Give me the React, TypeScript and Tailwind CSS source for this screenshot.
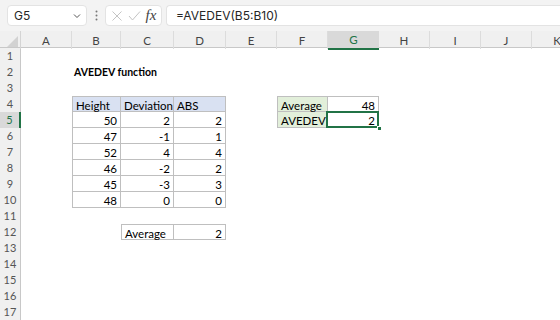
import React from 'react';

type Cell = {
  v: string;
  right?: boolean;
  bold?: boolean;
  fill?: 'blue' | 'green';
  box?: boolean;
  sel?: boolean;
};

const COLS = ['A', 'B', 'C', 'D', 'E', 'F', 'G', 'H', 'I', 'J', 'K'];
const ROWS = Array.from({ length: 17 }, (_, i) => i + 1);

const cells: Record<string, Cell> = {
  B2: { v: 'AVEDEV function', bold: true },
  B4: { v: 'Height', fill: 'blue', box: true },
  C4: { v: 'Deviation', fill: 'blue', box: true },
  D4: { v: 'ABS', fill: 'blue', box: true },
  F4: { v: 'Average', fill: 'green', box: true },
  G4: { v: '48', right: true, box: true },
  F5: { v: 'AVEDEV', fill: 'green', box: true },
  G5: { v: '2', right: true, box: true, sel: true },
  C12: { v: 'Average', box: true },
  D12: { v: '2', right: true, box: true },
};

const data = [
  [50, 2, 2],
  [47, -1, 1],
  [52, 4, 4],
  [46, -2, 2],
  [45, -3, 3],
  [48, 0, 0],
];
data.forEach((r, i) => {
  const row = 5 + i;
  ['B', 'C', 'D'].forEach((c, j) => {
    cells[c + row] = { v: String(r[j]), right: true, box: true };
  });
});

const isBox = (col: string, row: number) => !!cells[col + row]?.box;
const prevCol = (col: string) => COLS[COLS.indexOf(col) - 1] ?? '';

const GRID =
  'grid grid-cols-[21px_51px_49px_53px_52px_51px_51px_51px_51px_51px_51px_51px]';

function FormulaBar() {
  return (
    <div className="h-[31px] bg-[#f3f3f3] flex items-start pt-[5px] font-['Inter',sans-serif] text-[12px] text-[#262626]">
      <div className="ml-[7px] w-[80px] h-[21px] bg-white rounded-[4px] border border-[#e3e3e3] flex items-center justify-between pl-[6px] pr-[4px]">
        <span>G5</span>
        <svg width="10" height="10" viewBox="0 0 10 10">
          <path d="M2 3.5 L5 6.5 L8 3.5" fill="none" stroke="#555" strokeWidth="1" />
        </svg>
      </div>
      <div className="w-[18px] h-[21px] flex items-center justify-center">
        <svg width="3" height="11" viewBox="0 0 3 11">
          <circle cx="1.5" cy="1.5" r="1" fill="#777" />
          <circle cx="1.5" cy="5.5" r="1" fill="#777" />
          <circle cx="1.5" cy="9.5" r="1" fill="#777" />
        </svg>
      </div>
      <div className="w-[57px] h-[21px] bg-white rounded-[4px] border border-[#e3e3e3] flex items-center justify-around px-[2px]">
        <svg width="12" height="12" viewBox="0 0 12 12">
          <path d="M1.5 1.5 L10.5 10.5 M10.5 1.5 L1.5 10.5" stroke="#c4c4c4" strokeWidth="1" />
        </svg>
        <svg width="13" height="12" viewBox="0 0 13 12">
          <path d="M1 6 L4.5 10 L12 1.5" fill="none" stroke="#c4c4c4" strokeWidth="1" />
        </svg>
        <span className="font-['Liberation_Serif',serif] italic text-[15px] text-[#444] leading-none">
          fx
        </span>
      </div>
      <div className="ml-[4px] flex-1 h-[21px] bg-white rounded-l-[4px] border border-r-0 border-[#e3e3e3] flex items-center pl-[9px]">
        =AVEDEV(B5:B10)
      </div>
    </div>
  );
}

function ColumnHeaders() {
  return (
    <div className={GRID + ' h-[17px] bg-[#f0f0f0] border-b border-[#c8c8c8]'}>
      <div className="relative border-r border-[#d4d4d4]">
        <svg className="absolute right-[2px] bottom-[2px]" width="11" height="11" viewBox="0 0 11 11">
          <path d="M11 0 L11 11 L0 11 Z" fill="#d2d2d2" />
        </svg>
      </div>
      {COLS.map((c) => (
        <div
          key={c}
          className={
            c === 'G'
              ? 'flex items-center justify-center bg-[#d9d9d9] text-[#217346] border-b-2 border-[#217346] -mb-px'
              : 'flex items-center justify-center text-[#444] border-r border-[#dcdcdc]'
          }
        >
          {c}
        </div>
      ))}
    </div>
  );
}

function SheetCell({ col, row }: { col: string; row: number }) {
  const cell = cells[col + row];
  if (!cell) return <div className="h-4" />;
  const cls = [
    'relative h-4 px-[3px] leading-[17px] whitespace-nowrap',
    cell.right ? 'text-right' : 'text-left',
    cell.bold ? 'font-bold text-[10.5px] pl-[2px]' : '',
    cell.fill === 'blue' ? 'bg-[#d9e1f2]' : '',
    cell.fill === 'green' ? 'bg-[#e2efda]' : '',
    cell.box ? 'border-r border-b border-[#bfbfbf]' : 'overflow-visible',
    cell.box && !isBox(col, row - 1) ? 'border-t' : '',
    cell.box && !isBox(prevCol(col), row) ? 'border-l' : '',
  ].join(' ');
  return (
    <div className={cls}>
      {cell.v}
      {cell.sel && (
        <>
          <div className="absolute -left-[2px] -top-px -right-[1px] -bottom-[1px] border-2 border-[#217346]" />
          <div className="absolute -right-[4px] -bottom-[4px] w-[5px] h-[5px] bg-[#217346] border border-white" />
        </>
      )}
    </div>
  );
}

export default function App() {
  return (
    <div className="w-[560px] h-[320px] overflow-hidden bg-white">
      <FormulaBar />
      <div className="font-['Lato',sans-serif] text-[11.5px] text-black">
        <ColumnHeaders />
        {ROWS.map((r) => (
          <div key={r} className={GRID + ' h-4'}>
            <div
              className={
                r === 5
                  ? 'flex items-center justify-center bg-[#d9d9d9] text-[#217346] border-r-2 border-[#217346] text-[11px]'
                  : 'flex items-center justify-center bg-[#f0f0f0] text-[#555] border-r border-[#c8c8c8] text-[11px]'
              }
            >
              {r}
            </div>
            {COLS.map((c) => (
              <SheetCell key={c} col={c} row={r} />
            ))}
          </div>
        ))}
      </div>
    </div>
  );
}
